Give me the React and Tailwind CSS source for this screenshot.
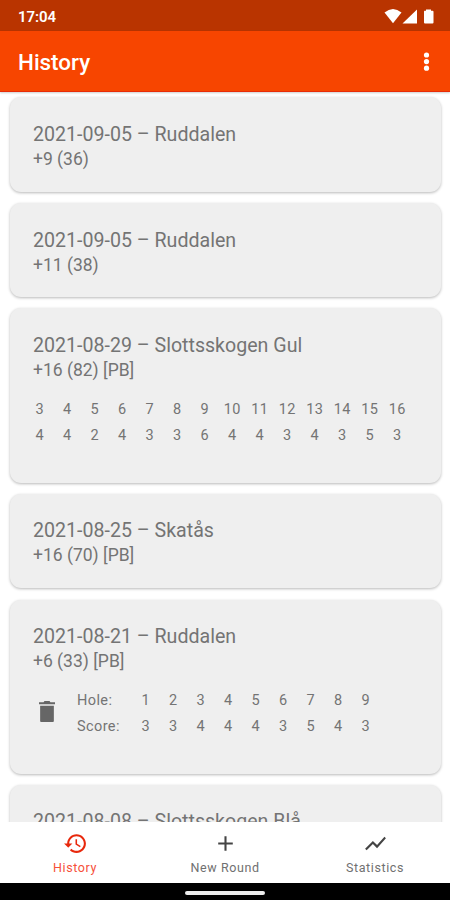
import React from "react";

const rounds = [
  { title: "2021-09-05 – Ruddalen", score: "+9 (36)", box: "h-[95px] pt-[25px]" },
  { title: "2021-09-05 – Ruddalen", score: "+11 (38)", box: "mt-[11px] h-[94px] pt-[25px]" },
  {
    title: "2021-08-29 – Slottsskogen Gul",
    score: "+16 (82) [PB]",
    box: "mt-[11px] h-[175px] pt-[25px]",
    holes: [3, 4, 5, 6, 7, 8, 9, 10, 11, 12, 13, 14, 15, 16],
    scores: [4, 4, 2, 4, 3, 3, 6, 4, 4, 3, 4, 3, 5, 3],
  },
  { title: "2021-08-25 – Skatås", score: "+16 (70) [PB]", box: "mt-[11px] h-[94px] pt-[24px]" },
  {
    title: "2021-08-21 – Ruddalen",
    score: "+6 (33) [PB]",
    box: "mt-[12px] h-[174px] pt-[23.5px]",
    labelled: true,
    holes: [1, 2, 3, 4, 5, 6, 7, 8, 9],
    scores: [3, 3, 4, 4, 4, 3, 5, 4, 3],
  },
  { title: "2021-08-08 – Slottsskogen Blå", score: "+12 (78)", box: "mt-[11px] h-[95px] pt-[24px]" },
];

function Row({ values }) {
  return (
    <div className="flex">
      {values.map((v, i) => (
        <span key={i} className="w-[27.5px] shrink-0 text-center">
          {v}
        </span>
      ))}
    </div>
  );
}

function ScoreTable({ round }) {
  return (
    <div className="mt-[14px] flex text-[14.5px] leading-[26px] tracking-[0.3px]">
      {round.labelled && (
        <>
          <svg viewBox="5 3 14 18" className="ml-[6px] mt-[13.5px] h-[21px] w-[16px]" fill="#666" preserveAspectRatio="none">
            <path d="M6 20.200q0 .8.8.8h10.400q.8 0 .8-.8V7H6zM19 4h-4l-.8-1H9.800L9 4H5v1.800h14z" />
          </svg>
          <div className="ml-[22px] w-[55px] tracking-[0.4px]">
            <div>Hole:</div>
            <div>Score:</div>
          </div>
        </>
      )}
      <div className={round.labelled ? "" : "-ml-[7px]"}>
        <Row values={round.holes} />
        <Row values={round.scores} />
      </div>
    </div>
  );
}

function Card({ round }) {
  return (
    <section
      className={`shrink-0 overflow-hidden rounded-[11px] bg-[#efefef] pl-[23px] text-[#747474] shadow-[0_1px_3px_rgba(0,0,0,0.28)] ${round.box}`}
    >
      <h2 className="text-[19.600px] leading-[25px] whitespace-nowrap">{round.title}</h2>
      <p className="text-[17.500px] leading-[25px]">{round.score}</p>
      {round.holes && <ScoreTable round={round} />}
    </section>
  );
}

function NavItem({ label, active, children }) {
  return (
    <div className={`flex flex-1 flex-col items-center pt-[9px] ${active ? "text-[#f6503a]" : "text-[#707070]"}`}>
      <svg viewBox="0 0 24 24" className={`h-[25px] w-[25px] ${active ? "text-[#e8280c]" : "text-[#444]"}`} fill="currentColor">
        {children}
      </svg>
      <span className="mt-[4px] text-[12.500px] leading-[16px] tracking-[0.6px]">{label}</span>
    </div>
  );
}

export default function App() {
  return (
    <div className="flex h-[900px] w-[450px] flex-col overflow-hidden bg-white font-['Roboto',sans-serif]">
      <div className="flex h-[31px] shrink-0 items-center justify-between bg-[#b93400] pl-[18px] pr-[16px] text-white">
        <span className="pt-[2px] text-[15px] leading-[18px] font-semibold tracking-[-0.1px]">17:04</span>
        <svg width="50" height="16" viewBox="0 0 50 16" fill="white">
          <path d="M0.500 4.500Q9 -2.500 17.500 4.500L9 15.300Z" />
          <path d="M18.500 15.500L33 1.500V15.500Z" />
          <path d="M40.500 2.700H42V1.500H47V2.700H48.500Q49.500 2.700 49.500 3.700V14.500Q49.500 15.500 48.500 15.500H41Q40 15.500 40 14.500V3.700Q40 2.700 40.500 2.700Z" />
        </svg>
      </div>
      <header className="z-10 flex h-[61px] shrink-0 items-center justify-between border-b border-[#e82c08] bg-[#f74500] pl-[18px] pr-[20px] text-white shadow-[0_1px_2px_rgba(0,0,0,0.2)]">
        <h1 className="pt-[1px] text-[22.400px] leading-[28px] font-medium">History</h1>
        <svg width="7" height="20" viewBox="0 0 7 20" fill="white">
          <circle cx="3.500" cy="4" r="2.600" />
          <circle cx="3.500" cy="10.600" r="2.600" />
          <circle cx="3.500" cy="17.200" r="2.600" />
        </svg>
      </header>
      <main className="flex min-h-0 flex-1 flex-col overflow-hidden pt-[5px] pr-[9px] pl-[10px]">
        {rounds.map((round, i) => (
          <Card key={i} round={round} />
        ))}
      </main>
      <nav className="flex h-[61px] shrink-0 bg-white">
        <NavItem label="History" active>
          <path d="M13 3c-4.970 0-9 4.030-9 9H1l3.890 3.890.07.14L9 12H6c0-3.870 3.130-7 7-7s7 3.130 7 7-3.130 7-7 7c-1.930 0-3.680-.79-4.940-2.060l-1.420 1.420C8.270 19.990 10.510 21 13 21c4.970 0 9-4.030 9-9s-4.030-9-9-9zm-1 5v5l4.280 2.540.72-1.210-3.500-2.080V8H12z" />
        </NavItem>
        <NavItem label="New Round">
          <path d="M19 13h-6v6h-2v-6H5v-2h6V5h2v6h6v2z" />
        </NavItem>
        <NavItem label="Statistics">
          <path d="M3.500 18.490l6-6.010 4 4L22 6.920l-1.410-1.410-7.090 7.970-4-4L2 16.990z" />
        </NavItem>
      </nav>
      <footer className="flex h-[17px] shrink-0 items-center justify-center bg-black pt-[2px]">
        <div className="h-[4px] w-[80px] rounded-full bg-[#ededed]" />
      </footer>
    </div>
  );
}
